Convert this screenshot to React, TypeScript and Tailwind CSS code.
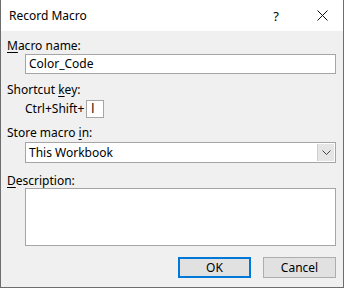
import React from "react";

const font = { fontFamily: '"Noto Sans", "Segoe UI", Arial, sans-serif' };

export default function App() {
  return (
    <div
      className="w-[344px] h-[288px] bg-[#f0f0f0] border-l border-r border-b border-[#6d6d6d] flex flex-col text-[12px] text-black overflow-hidden"
      style={font}
    >
      {/* Title bar */}
      <div className="h-[31px] bg-white flex items-center shrink-0">
        <div className="pl-[8px] text-[12px] leading-[16px] flex-1">Record Macro</div>
        <div className="w-[12px] text-center text-[13px] leading-[16px] mr-[34px]">?</div>
        <div className="w-[12px] h-[12px] mr-[15px] flex items-center justify-center">
          <svg width="11" height="11" viewBox="0 0 11 11">
            <path d="M0.5 0.5 L10.5 10.5 M10.5 0.5 L0.5 10.5" stroke="#111" strokeWidth="1" fill="none" />
          </svg>
        </div>
      </div>

      {/* Body */}
      <div className="flex flex-col pl-[6px] pr-[7px]">
        <div className="mt-[7px] leading-[16px]">
          <span className="underline underline-offset-2">M</span>acro name:
        </div>
        <div className="ml-[18px] h-[20px] bg-white border border-[#a5a5a5] flex items-center pl-[3px] leading-[16px]">
          Color_Code
        </div>

        <div className="mt-[8px] leading-[16px]">
          Shortcut <span className="underline underline-offset-2">k</span>ey:
        </div>
        <div className="ml-[18px] mt-[2px] flex items-center">
          <span className="leading-[16px]">Ctrl+Shift+</span>
          <div className="ml-[2px] w-[18px] h-[18px] bg-white border border-[#a5a5a5] flex items-center pl-[4px] leading-[16px]">
            l
          </div>
        </div>

        <div className="mt-[7px] leading-[16px]">
          Store macro <span className="underline underline-offset-2">i</span>n:
        </div>
        <div className="ml-[18px] mt-[1px] h-[21px] bg-white border border-[#a5a5a5] flex items-stretch">
          <div className="flex-1 flex items-center pl-[3px] leading-[16px]">This Workbook</div>
          <div className="w-[17px] m-[1px] bg-[#e5e5e5] border-l border-[#cfcfcf] flex items-center justify-center">
            <svg width="9" height="5" viewBox="0 0 9 5">
              <path d="M0.5 0.5 L4.5 4.5 L8.5 0.5" stroke="#444" strokeWidth="1" fill="none" />
            </svg>
          </div>
        </div>

        <div className="mt-[10px] leading-[16px]">
          <span className="underline underline-offset-2">D</span>escription:
        </div>
        <div className="ml-[18px] mt-[-1px] h-[58px] bg-white border border-[#a5a5a5]" />

        <div className="mt-[11px] flex justify-end gap-[12px]">
          <div className="w-[73px] h-[21px] bg-[#e1e1e1] border-2 border-[#0078d7] flex items-center justify-center leading-[16px]">
            OK
          </div>
          <div className="w-[73px] h-[21px] bg-[#e1e1e1] border border-[#adadad] flex items-center justify-center leading-[16px]">
            Cancel
          </div>
        </div>
      </div>
    </div>
  );
}
